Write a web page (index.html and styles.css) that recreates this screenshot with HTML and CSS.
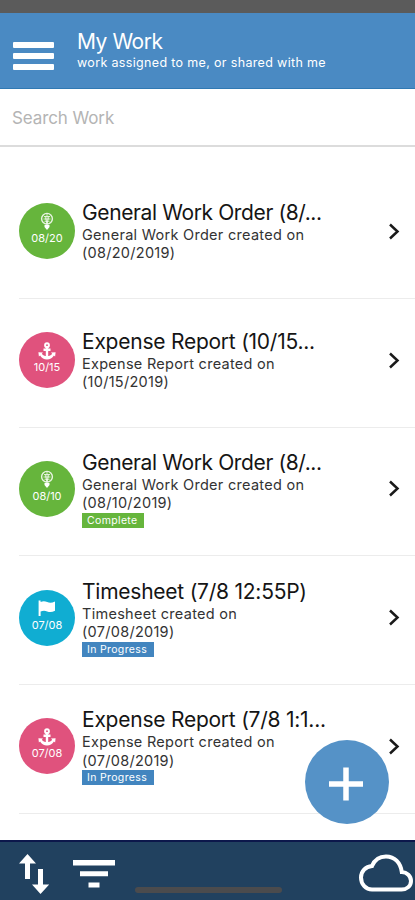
FILE: index.html
```
<!DOCTYPE html>
<html lang="en">
<head>
<meta charset="utf-8">
<title>My Work</title>
<link rel="stylesheet" href="styles.css">
</head>
<body>
<svg class="defs" aria-hidden="true">
  <symbol id="bulb" viewBox="0 0 14 19">
    <circle cx="7" cy="6.8" r="5.4" fill="none" stroke="currentColor" stroke-width="1.4" opacity=".85"/>
    <path d="M4 4.500h6M3.500 7h7M4.500 9.300h5M7 2v10M5 4l2 8 2-8" fill="none" stroke="currentColor" stroke-width="1" opacity=".7"/>
    <path d="M4.500 13h5v2L7 18 4.500 15z" fill="currentColor"/>
  </symbol>
  <symbol id="anchor" viewBox="0 0 18 18">
    <circle cx="9" cy="3.200" r="1.900" fill="none" stroke="currentColor" stroke-width="2"/>
    <path d="M9 5v11M5.500 7.800h7" fill="none" stroke="currentColor" stroke-width="2.400"/>
    <path d="M.4 10.300l4.600.2-1.200 1.300c1 1.800 2.800 2.300 5.200 2.300s4.200-.5 5.200-2.300L13 10.500l4.600-.2-.5 4.300-1.200-1C14.300 16.300 12 17.500 9 17.500s-5.300-1.200-6.900-3.900l-1.200 1z" fill="currentColor"/>
  </symbol>
  <symbol id="flag" viewBox="0 0 18 17">
    <path d="M.6.600h2V2c2.500-1.200 4.400-.9 6.600 0 2.600 1 4.800.8 7.800-.6v9.400c-3 1.400-5.200 1.500-7.800.6-2.200-.8-4.100-1-6.600.2V16h-2z" fill="currentColor"/>
  </symbol>
  <symbol id="chevron" viewBox="0 0 12 17">
    <path d="M2 1.500l7.500 7L2 15.500" fill="none" stroke="currentColor" stroke-width="2.500"/>
  </symbol>
</svg>
<div class="status"></div>
<header class="header">
  <div class="menu"><span></span><span></span><span></span></div>
  <div>
    <h1 class="title">My Work</h1>
    <p class="subtitle">work assigned to me, or shared with me</p>
  </div>
</header>
<div class="search">Search Work</div>
<main class="list">
  <article class="row">
    <div class="badge green"><svg class="bulb"><use href="#bulb"/></svg><span>08/20</span></div>
    <div class="text"><h2 class="tight">General Work Order (8/...</h2><p>General Work Order created on<br>(08/20/2019)</p></div>
    <svg class="chevron"><use href="#chevron"/></svg>
  </article>
  <article class="row">
    <div class="badge pink"><svg class="anchor"><use href="#anchor"/></svg><span>10/15</span></div>
    <div class="text"><h2>Expense Report (10/15...</h2><p>Expense Report created on<br>(10/15/2019)</p></div>
    <svg class="chevron"><use href="#chevron"/></svg>
  </article>
  <article class="row">
    <div class="badge green"><svg class="bulb"><use href="#bulb"/></svg><span>08/10</span></div>
    <div class="text"><h2 class="tight">General Work Order (8/...</h2><p>General Work Order created on<br>(08/10/2019)</p><div class="tag complete">Complete</div></div>
    <svg class="chevron"><use href="#chevron"/></svg>
  </article>
  <article class="row">
    <div class="badge cyan"><svg class="flag"><use href="#flag"/></svg><span>07/08</span></div>
    <div class="text"><h2>Timesheet (7/8 12:55P)</h2><p>Timesheet created on<br>(07/08/2019)</p><div class="tag progress">In Progress</div></div>
    <svg class="chevron"><use href="#chevron"/></svg>
  </article>
  <article class="row">
    <div class="badge pink"><svg class="anchor"><use href="#anchor"/></svg><span>07/08</span></div>
    <div class="text"><h2>Expense Report (7/8 1:1...</h2><p>Expense Report created on<br>(07/08/2019)</p><div class="tag progress">In Progress</div></div>
    <svg class="chevron"><use href="#chevron"/></svg>
  </article>
</main>
<div class="fab"><svg viewBox="0 0 34 34"><path d="M17 0.500v33M0 17h34" fill="none" stroke="#fff" stroke-width="5.500"/></svg></div>
<footer class="footer">
  <svg class="sort" viewBox="0 0 32 42"><path d="M9.500 1l8.500 9.500h-6V26H7V10.500H1zM22.500 41l8.700-9.500H25V16h-5v15.500h-6z" fill="#fff"/></svg>
  <svg class="filter" viewBox="0 0 42 30"><path d="M0 1h42v5.500H0zM7 12.200h28v5H7zM15.500 23.500h11v5h-11z" fill="#fff"/></svg>
  <svg class="cloud" viewBox="0 0 54 38"><path d="M13 35.500h29.500c5.500 0 9.500-3.500 9.500-8.500s-4-8.800-9.200-9C41.500 8.500 35.500 2.500 27 2.500c-6.500 0-11.500 3.500-14 9.500C6.500 12.500 2 17.500 2 23.500c0 7 5 12 11 12z" fill="none" stroke="#fff" stroke-width="4"/></svg>
  <div class="home"></div>
</footer>
</body>
</html>
```
FILE: styles.css
```
* { box-sizing: border-box; margin: 0; padding: 0; }
body {
  position: relative;
  width: 415px;
  height: 900px;
  overflow: hidden;
  display: flex;
  flex-direction: column;
  background: #fff;
  font-family: Inter, "Liberation Sans", sans-serif;
  color: #151515;
}
.defs { position: absolute; width: 0; height: 0; }
h1, h2 { font-weight: 400; white-space: nowrap; }
.status { height: 12.500px; background: #5b5b5b; flex: none; }
.header {
  flex: none;
  height: 76px;
  display: flex;
  background: #4a8ac3;
  border-bottom: 1px solid #3079b3;
  color: #fff;
  padding-left: 13px;
}
.menu { width: 41px; margin: 29.500px 23px 0 0; display: flex; flex-direction: column; gap: 5.500px; }
.menu span { height: 5.500px; background: #fff; border-radius: 1px; }
.title { font-size: 21px; line-height: 26px; margin-top: 16px; letter-spacing: -0.45px; }
.subtitle { font-size: 12.500px; line-height: 16px; letter-spacing: 0.34px; white-space: nowrap; }
.search {
  flex: none;
  height: 58px;
  border-bottom: 2px solid #dcdcdc;
  padding-left: 12px;
  font-size: 17px;
  line-height: 58px;
  letter-spacing: -0.1px;
  color: #b4b4b4;
}
.list { flex: 1; padding: 23.500px 0 0 19px; min-height: 0; }
.row {
  height: 128.750px;
  display: flex;
  align-items: center;
  border-bottom: 1px solid #ececec;
  padding-bottom: 5px;
}
.badge {
  width: 56px;
  height: 56px;
  border-radius: 50%;
  display: flex;
  flex-direction: column;
  align-items: center;
  color: #fff;
  font-size: 11px;
  line-height: 14px;
  flex: none;
}
.green { background: #66b53c; }
.pink { background: #e0527d; }
.cyan { background: #10add2; }
.bulb { width: 14px; height: 19px; margin-top: 9px; }
.anchor { width: 18px; height: 18px; margin-top: 10px; }
.flag { width: 18px; height: 17px; margin-top: 10px; margin-bottom: 1px; }
.text { width: 300px; margin-left: 7px; }
.text h2 { font-size: 21px; line-height: 26px; letter-spacing: -0.24px; }
.text .tight { letter-spacing: -0.38px; }
.text p { font-size: 14.500px; line-height: 18.500px; letter-spacing: 0.28px; color: #333; white-space: nowrap; }
.tag {
  width: 72px;
  height: 15px;
  font-size: 10.500px;
  line-height: 15px;
  color: #fff;
  padding-left: 5px;
  letter-spacing: 0.35px;
  white-space: nowrap;
}
.complete { width: 62px; background: #66b53c; }
.progress { background: #4285bf; }
.chevron { width: 12px; height: 17px; margin-left: 6px; color: #1a1a1a; flex: none; }
.fab {
  position: absolute;
  left: 305px;
  top: 740px;
  width: 84px;
  height: 84px;
  border-radius: 50%;
  background: #5592c7;
  display: grid;
  place-items: center;
}
.fab svg { width: 34px; height: 34px; margin-top: 4px; margin-left: -2px; }
.footer {
  position: relative;
  flex: none;
  height: 60px;
  display: flex;
  background: #21415f;
  border-top: 2px solid #0c174b;
}
.sort { width: 32px; height: 42px; margin: 11px 0 0 18px; }
.filter { width: 42px; height: 30px; margin: 17px 0 0 23px; }
.cloud { width: 54px; height: 38px; margin: 12px 2px 0 auto; }
.home {
  position: absolute;
  left: 135px;
  top: 45px;
  width: 147px;
  height: 6px;
  border-radius: 3px;
  background: #4b4b4d;
}
```
